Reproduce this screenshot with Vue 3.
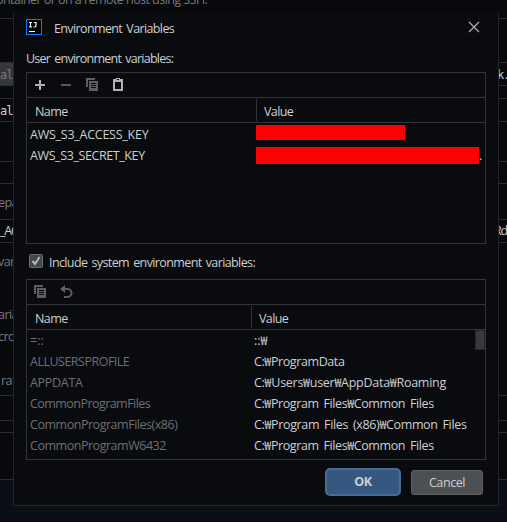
<script setup>
const bands = [
  { h: 19, texts: [{ t: 'ontainer or on a remote host using SSH.', top: -11, x: -4 }] },
  { h: 44 },
  { h: 23, fill: true, left: 'al', right: 'k.', mono: true },
  { h: 13 },
  { h: 23, left: 'alA', mono: true },
  { h: 40 },
  { h: 22 },
  { h: 36, texts: [{ t: 'epa', top: 8, x: -2 }] },
  { h: 23, left: '_AC', right: 'Rd', tight: true },
  {
    h: 153,
    texts: [
      { t: 'varia', top: 8, x: -2 },
      { t: 'aria', top: 61, x: -2 },
      { t: 'cro', top: 83, x: -2 },
      { t: 'rati', top: 127, x: 1 },
    ],
  },
  { h: 25 },
  { h: 12 },
  { h: 47 },
]
const userVars = [
  { name: 'AWS_S3_ACCESS_KEY', ls: -0.25, w: 149, h: 15, tail: "'", up: true },
  { name: 'AWS_S3_SECRET_KEY', ls: -0.4, w: 223, h: 17, tail: '.' },
]
const sysVars = [
  { name: '=::', value: '::₩', ls: 0, vls: 0 },
  { name: 'ALLUSERSPROFILE', value: 'C:₩ProgramData', ls: -0.5, vls: -0.4 },
  { name: 'APPDATA', value: 'C:₩Users₩user₩AppData₩Roaming', ls: -0.3, vls: -0.27 },
  { name: 'CommonProgramFiles', value: 'C:₩Program Files₩Common Files', ls: -0.55, vls: -0.4 },
  { name: 'CommonProgramFiles(x86)', value: 'C:₩Program Files (x86)₩Common Files', ls: -0.47, vls: -0.35 },
  { name: 'CommonProgramW6432', value: 'C:₩Program Files₩Common Files', ls: -0.47, vls: -0.4 },
]
const spacing = (v) => ({ letterSpacing: v + 'px' })
</script>

<template>
  <div class="screen">
    <div class="backdrop">
      <div v-for="(b, i) in bands" :key="i" class="band" :class="{ mono: b.mono, tight: b.tight }" :style="{ height: b.h + 'px' }">
        <span v-if="b.left" class="edge left" :class="{ filled: b.fill }">{{ b.left }}</span>
        <span v-if="b.right" class="edge right">{{ b.right }}</span>
        <span v-for="t in b.texts" :key="t.t" class="loose" :style="{ top: t.top + 'px', left: t.x + 'px' }">{{ t.t }}</span>
      </div>
    </div>

    <section class="dialog">
      <header class="titlebar">
        <svg class="logo" width="16" height="16" viewBox="0 0 16 16">
          <rect x=".5" y=".5" width="15" height="15" fill="#000" stroke="#087cfa" />
          <path d="M3 3.500h3M4.500 3v5M3 8h3M8 3.500h2.500M10 3v3.500q0 1.500-1.200 1.500H7.500M3 12.500h6" fill="none" stroke="#fff" stroke-width="1.200" />
        </svg>
        <h1>Environment Variables</h1>
        <svg class="close" width="12" height="12" viewBox="0 0 12 12"><path d="M1 1l10 10M11 1L1 11" stroke="#b4b6b8" stroke-width="1.100" /></svg>
      </header>

      <div class="caption">User environment variables:</div>

      <div class="panel user">
        <div class="tools">
          <svg width="16" height="16" viewBox="0 0 16 16"><path d="M8 3v10M3 8h10" stroke="#afb1b3" stroke-width="2" /></svg>
          <svg width="16" height="16" viewBox="0 0 16 16"><path d="M3 8h10" stroke="#56585a" stroke-width="2" /></svg>
          <svg width="16" height="16" viewBox="0 0 16 16" shape-rendering="crispEdges"><path d="M2 10V1h9v2H4v7z" fill="#5c5e60" /><path fill-rule="evenodd" d="M5 4h9v10H5zM7 6v1h5V6zM7 8v1h5V8zM7 10v1h5v-1z" fill="#5c5e60" /></svg>
          <svg width="16" height="16" viewBox="0 0 16 16" shape-rendering="crispEdges"><path fill-rule="evenodd" d="M3 2h3V1h4v1h3v12H3zM5 5v7h6V5z" fill="#afb1b3" /><path d="M7 2h2v1H7z" fill="#090b0f" /></svg>
        </div>
        <div class="thead"><span class="c1">Name</span><span class="c2">Value</span></div>
        <div v-for="r in userVars" :key="r.name" class="row">
          <span class="c1" :style="spacing(r.ls)">{{ r.name }}</span>
          <span class="c2" :class="{ up: r.up }"><i class="redact" :style="{ width: r.w + 'px', height: r.h + 'px' }"></i><b>{{ r.tail }}</b></span>
        </div>
      </div>

      <label class="check">
        <svg width="14" height="14" viewBox="0 0 14 14"><rect x=".5" y=".5" width="13" height="13" rx="1" fill="#43474a" stroke="#6b6d6f" /><path d="M3.500 7l2.500 3 4.500-7" fill="none" stroke="#b4b6b8" stroke-width="2" /></svg>
        <span>Include system environment variables:</span>
      </label>

      <div class="panel system">
        <div class="tools">
          <svg width="16" height="16" viewBox="0 0 16 16" shape-rendering="crispEdges"><path d="M2 10V1h9v2H4v7z" fill="#5c5e60" /><path fill-rule="evenodd" d="M5 4h9v10H5zM7 6v1h5V6zM7 8v1h5V8zM7 10v1h5v-1z" fill="#5c5e60" /></svg>
          <svg width="16" height="16" viewBox="0 0 16 16"><path d="M5 5h4.500a4 4 0 0 1 0 8H6" fill="none" stroke="#5c5e60" stroke-width="2" /><path d="M2 5l5-4v8z" fill="#5c5e60" /></svg>
        </div>
        <div class="thead"><span class="c1">Name</span><span class="c2">Value</span></div>
        <div class="scroll">
          <div class="rows">
            <div v-for="r in sysVars" :key="r.name" class="row">
              <span class="c1" :style="spacing(r.ls)">{{ r.name }}</span>
              <span class="c2" :style="spacing(r.vls)">{{ r.value }}</span>
            </div>
          </div>
          <div class="thumb"></div>
        </div>
      </div>

      <footer>
        <button class="ok">OK</button>
        <button class="cancel">Cancel</button>
      </footer>
    </section>
  </div>
</template>

<style>
body { margin: 0; background: #0b0e14; }
</style>

<style scoped>
.screen { position: relative; width: 507px; height: 522px; overflow: hidden; background: #0b0e14; color: #cdcfd1; font: 12.5px/21px "Open Sans", "Noto Sans CJK KR", sans-serif; border-bottom: 1px solid #07030d; box-sizing: border-box; }
.screen * { box-sizing: border-box; }
.band { position: relative; display: flex; justify-content: space-between; border-bottom: 1px solid #2b2d30; background: #07090c; white-space: nowrap; overflow: hidden; }
.mono { font: 12px/24px "DejaVu Sans Mono", monospace; letter-spacing: -1px; }
.tight { letter-spacing: -1.200px; }
.edge.left { width: 14px; overflow: hidden; }
.edge.right { width: 10px; margin-left: auto; }
.tight .edge.right { width: 13px; }
.filled { background: #35383a; color: #77797b; }
.loose { position: absolute; color: #77797b; letter-spacing: -.55px; }
.dialog { position: absolute; left: 13px; top: 13px; width: 486px; height: 493px; padding: 0 12px; background: #090b0f; border: 1px solid #232528; border-top-color: #0a0c10; display: flex; flex-direction: column; }
.titlebar { height: 34px; display: flex; align-items: flex-start; padding-top: 5px; }
.logo { flex: none; }
h1 { margin: 0 0 0 12px; font-size: 12.5px; font-weight: 400; line-height: 19px; letter-spacing: -.62px; word-spacing: 1.500px; flex: 1; }
.close { margin: 2px 6px 0 0; }
.caption { height: 24px; line-height: 21px; letter-spacing: -.74px; word-spacing: 1.500px; }
.panel { width: 460px; border: 1px solid #323437; flex: none; }
.user { height: 172px; }
.tools { height: 25px; border-bottom: 1px solid #323437; display: flex; align-items: center; gap: 10px; padding-left: 5px; }
.thead { height: 25px; border-bottom: 1px solid #323437; display: flex; line-height: 27px; letter-spacing: -.6px; }
.thead .c1 { padding-left: 8px; }
.thead .c2 { height: 22px; margin-top: 1px; line-height: 25px; border-left: 1px solid #323437; padding-left: 7px; }
.c1 { width: 229px; flex: none; white-space: nowrap; }
.c2 { white-space: nowrap; word-spacing: 2px; }
.row { height: 21px; line-height: 21px; display: flex; }
.row .c1 { padding-left: 3px; }
.user .row { padding-top: 1px; }
.user .row .c2 { display: flex; align-items: center; }
.user .row .c2.up { align-items: flex-start; padding-top: 1px; }
.redact { background: #f00; flex: none; }
.user .row b { font-weight: 400; }
.user .row .up b { height: 8px; line-height: 14px; overflow: hidden; width: 1px; }
.check { display: flex; height: 35px; padding: 10px 0 0 3px; gap: 6px; flex: none; }
.check span { line-height: 17px; letter-spacing: -.61px; word-spacing: 1.500px; }
.system { height: 181px; }
.system .thead .c1, .system .row .c1 { width: 224px; }
.system .row .c1 { color: #6d6f71; }
.system .row .c2 { padding-left: 3px; }
.scroll { display: flex; }
.rows { width: 448px; }
.thumb { width: 10px; height: 20px; background: #38393c; border: 1px solid #232528; }
footer { display: flex; justify-content: flex-end; padding: 8px 3px 0 0; gap: 10px; align-items: center; }
button { padding: 0; font: 12.5px/22px "Open Sans", sans-serif; border-radius: 3px; color: #cdcfd1; letter-spacing: -.4px; }
.ok { width: 76px; height: 28px; border: 2px solid #466d94; background: #365880; font-weight: 700; border-radius: 5px; }
.cancel { width: 72px; height: 25px; padding-top: 1px; border: 1px solid #5e6060; background: #4c5052; }
</style>
